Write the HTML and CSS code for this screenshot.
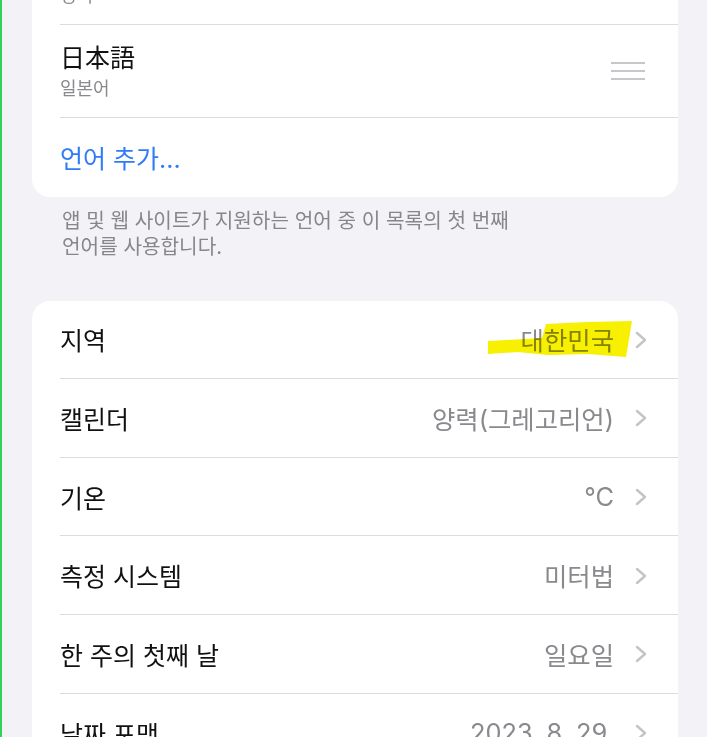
FILE: index.html
```html
<!DOCTYPE html>
<html lang="ko">
<head>
    <meta charset="UTF-8">
    <meta name="viewport" content="width=device-width, initial-scale=1.0">
    <title>언어 및 지역</title>
    <link rel="stylesheet" href="styles.css">
</head>
<body>
    <div class="page">
        <div class="card card-top">
            <div class="row row-tall">
                <div class="row-inner">
                    <div class="lang">
                        <span class="lang-name">English</span>
                        <span class="lang-sub">영어</span>
                    </div>
                    <svg class="handle" width="34" height="18" viewBox="0 0 34 18"><path d="M0 1h34M0 9h34M0 17h34" stroke="#c7c7cc" stroke-width="2"/></svg>
                </div>
            </div>
            <div class="row row-tall">
                <div class="row-inner">
                    <div class="lang">
                        <span class="lang-name">日本語</span>
                        <span class="lang-sub">일본어</span>
                    </div>
                    <svg class="handle" width="34" height="18" viewBox="0 0 34 18"><path d="M0 1h34M0 9h34M0 17h34" stroke="#c7c7cc" stroke-width="2"/></svg>
                </div>
            </div>
            <div class="row">
                <div class="row-inner">
                    <span class="link">언어 추가...</span>
                </div>
            </div>
        </div>
        <p class="footnote">앱 및 웹 사이트가 지원하는 언어 중 이 목록의 첫 번째<br>언어를 사용합니다.</p>

        <div class="card">
            <div class="row">
                <svg class="marker" width="144" height="37" viewBox="0 0 144 37"><polygon points="0,20 54,17 58,3 100,1 144,0 141,18 138,36 100,33 60,34 30,31 0,33" fill="#f7f000"/></svg>
                <div class="row-inner">
                    <span class="label">지역</span>
                    <span class="value">대한민국<svg class="chev" width="13" height="18" viewBox="0 0 13 18"><path d="M2 2l8 7-8 7" fill="none" stroke="#c4c4c7" stroke-width="2.4" stroke-linecap="round" stroke-linejoin="round"/></svg></span>
                </div>
            </div>
            <div class="row">
                <div class="row-inner">
                    <span class="label">캘린더</span>
                    <span class="value">양력(그레고리언)<svg class="chev" width="13" height="18" viewBox="0 0 13 18"><path d="M2 2l8 7-8 7" fill="none" stroke="#c4c4c7" stroke-width="2.4" stroke-linecap="round" stroke-linejoin="round"/></svg></span>
                </div>
            </div>
            <div class="row">
                <div class="row-inner">
                    <span class="label">기온</span>
                    <span class="value">°C<svg class="chev" width="13" height="18" viewBox="0 0 13 18"><path d="M2 2l8 7-8 7" fill="none" stroke="#c4c4c7" stroke-width="2.4" stroke-linecap="round" stroke-linejoin="round"/></svg></span>
                </div>
            </div>
            <div class="row">
                <div class="row-inner">
                    <span class="label">측정 시스템</span>
                    <span class="value">미터법<svg class="chev" width="13" height="18" viewBox="0 0 13 18"><path d="M2 2l8 7-8 7" fill="none" stroke="#c4c4c7" stroke-width="2.4" stroke-linecap="round" stroke-linejoin="round"/></svg></span>
                </div>
            </div>
            <div class="row">
                <div class="row-inner">
                    <span class="label">한 주의 첫째 날</span>
                    <span class="value">일요일<svg class="chev" width="13" height="18" viewBox="0 0 13 18"><path d="M2 2l8 7-8 7" fill="none" stroke="#c4c4c7" stroke-width="2.4" stroke-linecap="round" stroke-linejoin="round"/></svg></span>
                </div>
            </div>
            <div class="row">
                <div class="row-inner">
                    <span class="label">날짜 포맷</span>
                    <span class="value">2023. 8. 29.<svg class="chev" width="13" height="18" viewBox="0 0 13 18"><path d="M2 2l8 7-8 7" fill="none" stroke="#c4c4c7" stroke-width="2.4" stroke-linecap="round" stroke-linejoin="round"/></svg></span>
                </div>
            </div>
        </div>
    </div>
</body>
</html>
```

FILE: styles.css
```css
* {
    box-sizing: border-box;
}
body {
    font-family: Inter, 'Noto Sans CJK KR', sans-serif;
    background-color: #f2f2f7;
    margin: 0;
    height: 737px;
    overflow: hidden;
    border-left: 2px solid #2fd35a;
}
.page {
    padding: 0 29px 0 30px;
}
.card {
    background-color: #ffffff;
    border-radius: 18px;
    overflow: hidden;
}
.card-top {
    margin-top: -68px;
}
.row {
    position: relative;
    height: 78.6px;
    padding-left: 28px;
}
.row-tall {
    height: 93px;
}
.row-inner {
    height: 100%;
    display: flex;
    align-items: center;
    justify-content: space-between;
    padding-right: 30px;
    border-bottom: 1px solid #dcdce0;
}
.row:last-child .row-inner {
    border-bottom: none;
}
.lang {
    display: flex;
    flex-direction: column;
    gap: 4px;
    margin-top: 1px;
}
.lang-name {
    font-size: 25px;
    line-height: 30px;
    color: #111;
}
.lang-sub {
    font-size: 18px;
    line-height: 24px;
    color: #8a8a8e;
}
.handle {
    margin-right: 3px;
}
.link {
    font-size: 25px;
    color: #2f7cf6;
}
.footnote {
    margin: 11px 0 41px 30px;
    font-size: 20.2px;
    line-height: 26px;
    color: #86868b;
}
.label {
    font-size: 25px;
    color: #111;
}
.value {
    display: flex;
    align-items: center;
    gap: 21px;
    font-size: 25.4px;
    color: #8a8a8e;
}
.chev {
    margin-top: 1px;
}
.marker {
    position: absolute;
    top: 20px;
    right: 46px;
    mix-blend-mode: multiply;
}
```
